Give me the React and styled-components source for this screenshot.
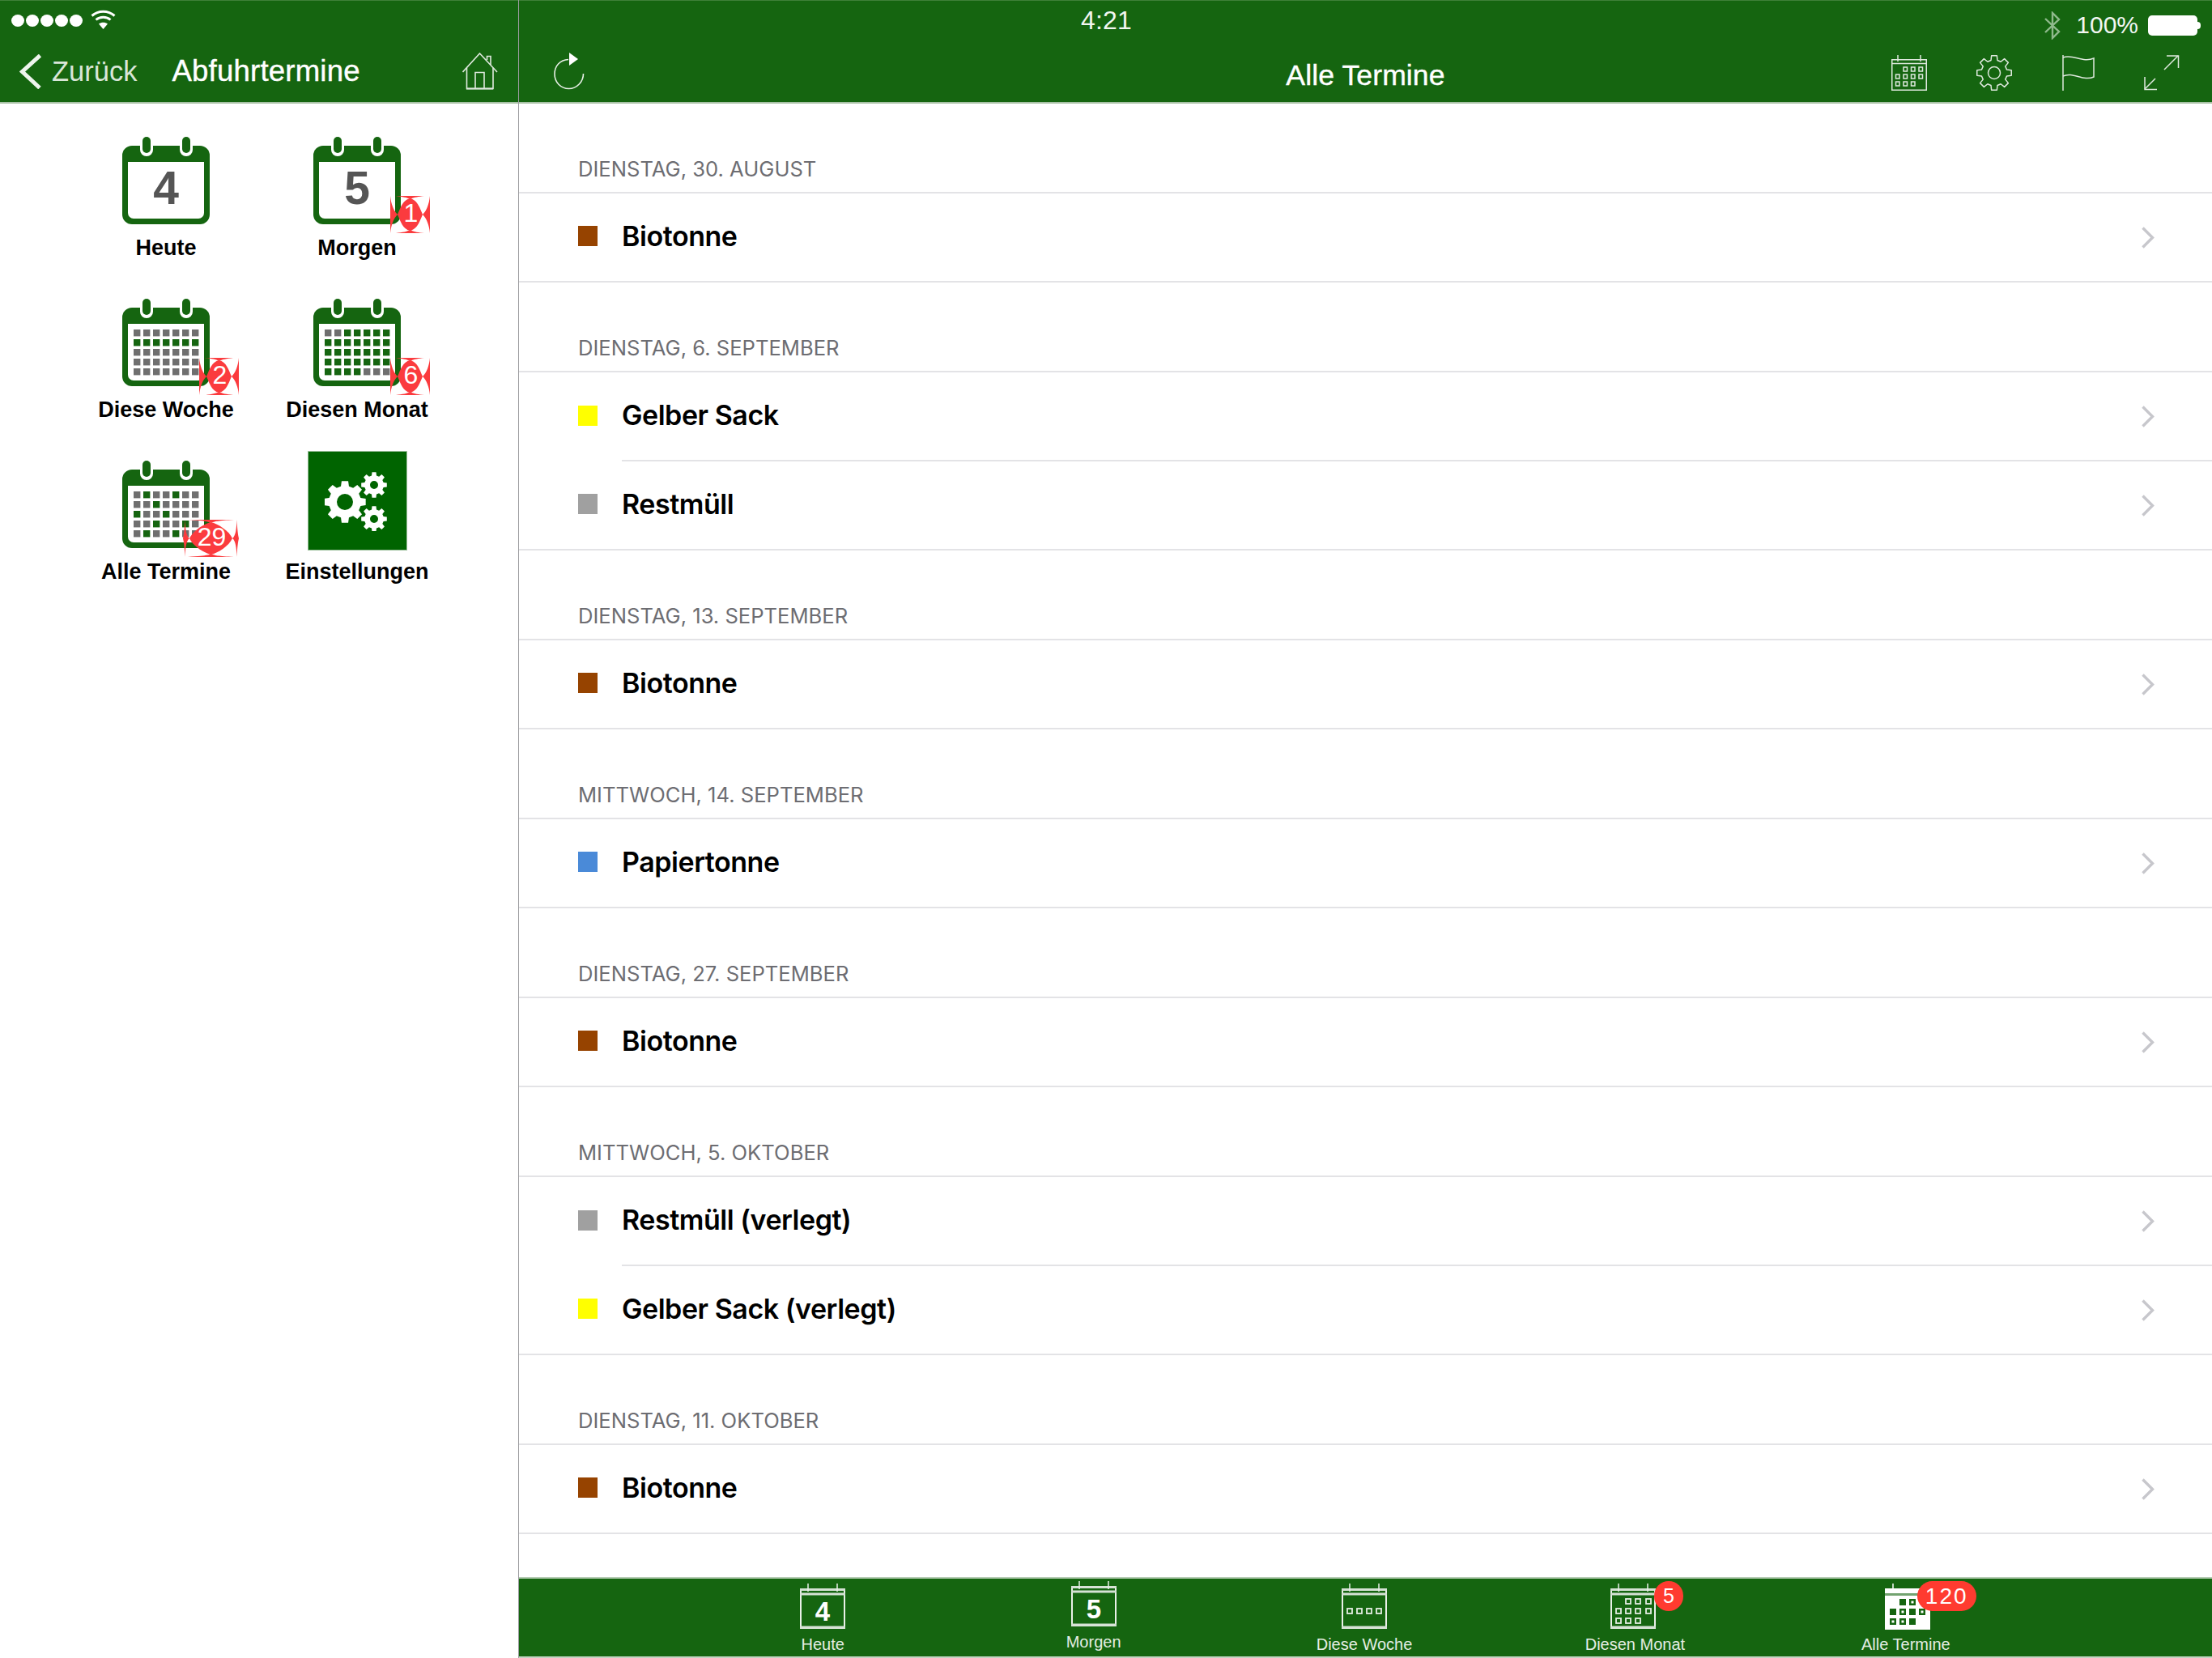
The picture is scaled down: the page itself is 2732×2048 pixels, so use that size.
import React from "react";
import styled, { createGlobalStyle } from "styled-components";

const GREEN = "#156510";

const Global = createGlobalStyle`
  html, body { margin: 0; padding: 0; background: #fff; }
  #root { width: 2732px; height: 2048px; overflow: hidden; }
`;

const Page = styled.div`
  width: 2732px;
  height: 2048px;
  display: flex;
  background: #fff;
  font-family: "Liberation Sans", Arial, sans-serif;
`;
const Sidebar = styled.aside`
  width: 641px;
  flex: none;
  border-right: 1px solid #9c9ca0;
  box-sizing: border-box;
  display: flex;
  flex-direction: column;
`;
const Main = styled.main`
  flex: 1;
  min-width: 0;
  display: flex;
  flex-direction: column;
`;
const Header = styled.header`
  height: 128px;
  flex: none;
  box-sizing: border-box;
  background: ${GREEN};
  border-top: 1px solid #3f8039;
  border-bottom: 2px solid #a9c2a7;
  display: flex;
  flex-direction: column;
  color: #fff;
`;
const StatusBar = styled.div`
  height: 39px;
  flex: none;
  display: flex;
  align-items: flex-start;
`;
const NavBar = styled.div`
  flex: 1;
  display: flex;
  align-items: center;
  padding-top: 10px;
`;
const Signal = styled.div`
  display: flex;
  gap: 2px;
  margin: 17px 0 0 14px;
`;
const Dot = styled.span`
  width: 16px;
  height: 15px;
  border-radius: 50%;
  background: #fff;
`;
const WifiIcon = styled.svg`
  margin: 11px 0 0 10px;
`;
const Clock = styled.div`
  margin: 6px 0 0 694px;
  font-size: 32px;
  line-height: 36px;
  letter-spacing: 0.2px;
  color: #f2f6f1;
`;
const StatusRight = styled.div`
  margin: 12px 13px 0 auto;
  display: flex;
  align-items: center;
`;
const Percent = styled.span`
  font-size: 30px;
  line-height: 36px;
  margin: 0 12px 0 19px;
  color: #f2f6f1;
`;
const Battery = styled.span`
  width: 61px;
  height: 25px;
  border-radius: 5px;
  background: #fff;
  position: relative;
  margin-right: 5px;
  &::after {
    content: "";
    position: absolute;
    left: 61px;
    top: 8px;
    width: 4px;
    height: 9px;
    border-radius: 0 4px 4px 0;
    background: #fff;
  }
`;
const BackChevron = styled.svg`
  margin-left: 24px;
`;
const BackText = styled.span`
  margin-left: 13px;
  font-size: 34.5px;
  color: #d9e6d8;
`;
const SideTitle = styled.span`
  margin-left: 43px;
  font-size: 36.6px;
  letter-spacing: 0.2px;
  color: #fff;
  -webkit-text-stroke: 0.4px #fff;
`;
const MainTitle = styled.span`
  margin-top: 10px;
  font-size: 35.6px;
  letter-spacing: 0.1px;
  color: #fff;
  -webkit-text-stroke: 0.4px #fff;
`;
const HomeIcon = styled.svg`
  margin-left: auto;
  margin-right: 25px;
`;
const MainNav = styled(NavBar)`
  display: grid;
  grid-template-columns: 1fr auto 1fr;
`;
const ReloadIcon = styled.svg`
  margin-left: 42px;
`;
const NavActions = styled.div`
  justify-self: end;
  display: flex;
  gap: 61.5px;
  margin: 4px 40px 0 0;
`;

const Grid = styled.div`
  display: grid;
  grid-template-columns: 236px 236px;
  grid-auto-rows: 200px;
  padding: 29px 0 0 87px;
`;
const Cell = styled.div`
  position: relative;
  display: flex;
  flex-direction: column;
  align-items: center;
`;
const CalendarSvg = styled.svg`
  margin-top: 12px;
  margin-bottom: 3px;
  display: block;
`;
const Tile = styled.div`
  width: 123px;
  height: 123px;
  background: #006400;
  box-shadow: 0 0 0 1px #9cc09c inset;
  display: flex;
  align-items: center;
  justify-content: center;
`;
const CellLabel = styled.div`
  margin-top: 10px;
  font-size: 27px;
  font-weight: 700;
  line-height: 32px;
  color: #000;
  white-space: nowrap;
`;
const Badge = styled.div`
  position: absolute;
  top: 85px;
  left: calc(50% + 90px - ${(p) => p.$w}px);
  width: ${(p) => p.$w}px;
  height: 46px;
  display: flex;
  align-items: center;
  justify-content: center;
  color: #fff;
  font-size: 32px;
  line-height: 46px;
  & svg {
    position: absolute;
    inset: 0;
  }
  & span {
    position: relative;
    margin-left: 2px;
    margin-top: -4px;
  }
`;

const List = styled.div`
  flex: 1;
  min-height: 0;
  overflow: hidden;
  font-family: Inter, "Liberation Sans", sans-serif;
`;
const SectionTitle = styled.div`
  height: 111px;
  box-sizing: border-box;
  border-bottom: 2px solid #e3e3e6;
  padding: 0 0 12px 73px;
  display: flex;
  align-items: flex-end;
  font-size: 25.6px;
  line-height: 32px;
  color: #6d6d72;
  text-transform: uppercase;
`;
const Row = styled.div`
  height: 110px;
  box-sizing: border-box;
  display: flex;
  align-items: stretch;
  ${(p) => (p.$last ? "border-bottom: 2px solid #e3e3e6;" : "")}
`;
const Swatch = styled.span`
  width: 24px;
  height: 25px;
  flex: none;
  align-self: center;
  margin: -3px 0 0 73px;
  background: ${(p) => p.$color};
`;
const RowBody = styled.div`
  flex: 1;
  margin-left: 30px;
  display: flex;
  align-items: center;
  justify-content: space-between;
  ${(p) => (p.$last ? "" : "border-bottom: 2px solid #e3e3e6;")}
`;
const RowTitle = styled.span`
  font-size: 34px;
  font-weight: 560;
  letter-spacing: -0.45px;
  color: #000;
  margin-top: -3px;
`;
const Disclosure = styled.svg`
  margin-right: 71px;
`;

const TabBar = styled.nav`
  height: 100px;
  flex: none;
  box-sizing: border-box;
  background: ${GREEN};
  border-top: 2px solid #b5ccb3;
  border-bottom: 2px solid #c3d4c2;
  display: flex;
  padding: 0 211px 0 208px;
`;
const Tab = styled.div`
  flex: 1;
  display: flex;
  flex-direction: column;
  align-items: center;
  padding-top: ${(p) => (p.$lift ? 3 : 6)}px;
`;
const TabIconWrap = styled.div`
  position: relative;
  width: 56px;
  height: 56px;
  margin-left: ${(p) => p.$nudge || 0}px;
`;
const TabLabel = styled.div`
  margin-top: 8px;
  font-size: 20px;
  line-height: 22px;
  color: #e4ede3;
  white-space: nowrap;
`;
const TabBadge = styled.div`
  position: absolute;
  top: -3px;
  left: ${(p) => p.$left}px;
  min-width: 36px;
  height: 37px;
  box-sizing: border-box;
  padding: 0 ${(p) => (p.$wide ? 10 : 0)}px;
  border-radius: 19px;
  background: #ff3b30;
  color: #fff;
  display: flex;
  align-items: center;
  justify-content: center;
  font-size: ${(p) => (p.$wide ? 28 : 25)}px;
  letter-spacing: ${(p) => (p.$wide ? 2 : 0)}px;
`;

const gearPath = (cx, cy, outer, inner, teeth) => {
  const pts = [];
  const step = (Math.PI * 2) / teeth;
  for (let i = 0; i < teeth; i++) {
    const a = i * step - Math.PI / 2;
    const d = step * 0.2;
    const e = step * 0.32;
    [
      [a - e, inner],
      [a - d, outer],
      [a + d, outer],
      [a + e, inner],
    ].forEach(([t, r]) =>
      pts.push(`${(cx + r * Math.cos(t)).toFixed(2)} ${(cy + r * Math.sin(t)).toFixed(2)}`)
    );
  }
  return "M" + pts.join("L") + "Z";
};
const circlePath = (cx, cy, r) =>
  `M${cx - r} ${cy}a${r} ${r} 0 1 0 ${r * 2} 0a${r} ${r} 0 1 0 ${-r * 2} 0Z`;

const Wifi = () => (
  <WifiIcon width="31" height="24" viewBox="0 0 31 24" fill="none" stroke="#fff" strokeWidth="3">
    <path d="M1.5 7.5C9.5 .5 21.5 .5 29.5 7.5" />
    <path d="M6.5 12.5C11.5 8 19.5 8 24.5 12.5" />
    <path d="M15.5 24L10 17.5C13 15 18 15 21 17.5Z" fill="#fff" stroke="none" />
  </WifiIcon>
);

const Bluetooth = () => (
  <svg width="20" height="35" viewBox="0 0 20 35" fill="none" stroke="#8fb98c" strokeWidth="2.4">
    <path d="M1 9L18 25L10 33V2L18 10L1 26" />
  </svg>
);

const Home = () => (
  <HomeIcon width="44" height="46" viewBox="0 0 44 46" fill="none" stroke="#dfe9de" strokeWidth="1.6">
    <path d="M.5 24L21.5 1L43 24" />
    <path d="M5.5 19V44.5H38V19" />
    <path d="M16 44V24.5H27V44" />
    <path d="M30.5 9V4.5H35V15" />
    <path d="M5 44.5H38" strokeWidth="2" />
  </HomeIcon>
);

const Reload = () => (
  <ReloadIcon width="40" height="46" viewBox="0 0 40 46" fill="none">
    <path d="M19 8.5C9 9 2 16 2 26.5C2 36.5 9.5 44.5 19.5 44.5C29.5 44.5 37.5 36 37.5 26" stroke="#e6efe5" strokeWidth="1.6" />
    <path d="M20 0L31 8L20 16Z" fill="#fff" />
  </ReloadIcon>
);

const iconStroke = "#dfe9de";

const NavCalendar = () => {
  const cells = [
    [10, 15],
    [19.5, 15],
    [29, 15],
    [0.5, 24],
    [10, 24],
    [19.5, 24],
    [29, 24],
    [0.5, 33],
    [10, 33],
    [19.5, 33],
  ];
  return (
    <svg width="44" height="44" viewBox="0 0 44 44" fill="none" stroke={iconStroke} strokeWidth="1.5">
      <rect x=".75" y="5.75" width="42.5" height="37.5" />
      <path d="M0 10.5H44M8 0V8M36 0V8" />
      <g transform="translate(5 0)">
        {cells.map(([x, y]) => (
          <rect key={`${x}-${y}`} x={x} y={y} width="4.5" height="5" />
        ))}
      </g>
    </svg>
  );
};

const NavGear = () => (
  <svg width="44" height="44" viewBox="0 0 44 44" fill="none" stroke={iconStroke} strokeWidth="1.5" strokeLinejoin="round">
    <path d={gearPath(22, 22, 21.5, 16, 8)} />
    <circle cx="22" cy="22" r="7.5" />
  </svg>
);

const NavFlag = () => (
  <svg width="40" height="44" viewBox="0 0 40 44" fill="none" stroke={iconStroke} strokeWidth="1.5">
    <path d="M1 0V44" />
    <path d="M1 3C13 -2 25 10 39 4V27C26 33 13 20 1 26" />
  </svg>
);

const NavExpand = () => (
  <svg width="44" height="44" viewBox="0 0 44 44" fill="none" stroke={iconStroke} strokeWidth="1.5">
    <path d="M1 42L14 29M25 18L42 1" />
    <path d="M28 1H42.5V16" />
    <path d="M1 27V42.5H16" />
  </svg>
);

const Calendar = ({ number, cells }) => {
  const palette = { g: "#6f6f6f", G: GREEN };
  return (
    <CalendarSvg width="108" height="108" viewBox="0 0 108 108">
      <rect x="0" y="11" width="108" height="97" rx="12" fill={GREEN} />
      <path d="M7 31H101V94a7 7 0 0 1-7 7H14a7 7 0 0 1-7-7Z" fill="#fff" />
      {[30, 79].map((x) => (
        <g key={x}>
          <rect x={x - 8} y="0" width="16" height="24" rx="8" fill="#fff" />
          <rect x={x - 5} y="0" width="10" height="20" rx="5" fill={GREEN} />
        </g>
      ))}
      {number && (
        <text x="54" y="83" textAnchor="middle" fontFamily="Liberation Sans" fontWeight="700" fontSize="57" fill="#555">
          {number}
        </text>
      )}
      {cells &&
        cells.map((row, r) =>
          row.split("").map((c, i) => (
            <rect key={`${r}-${i}`} x={14 + i * 12} y={38 + r * 12} width="8.4" height="8.4" fill={palette[c]} />
          ))
        )}
    </CalendarSvg>
  );
};

const CellBadge = ({ text, w = 49, wing = 9, thin }) => {
  const c = w / 2;
  const m = 23;
  const r = w - wing;
  const lens = `M${wing} ${m}C${wing + 4} ${m - 9} ${c - 9} ${m - 18} ${c} ${m - 20}C${c + 9} ${m - 18} ${r - 4} ${m - 9} ${r} ${m}C${r - 4} ${m + 9} ${c + 9} ${m + 18} ${c} ${m + 20}C${c - 9} ${m + 18} ${wing + 4} ${m + 9} ${wing} ${m}Z`;
  const left = thin
    ? `M2.5 0C3 12 4 20 ${wing} ${m}C4 26 3 34 2.5 46C2 34 1 27 0 ${m}C1 19 2 12 2.5 0Z`
    : `M0 0C1 10 4 18 ${wing} ${m}C4 28 1 36 0 46Z`;
  return (
    <Badge $w={w}>
      <svg width={w} height="46" viewBox={`0 0 ${w} 46`}>
        <path d={lens} fill="#fb3b3e" />
        <path d={left} fill="#fb3b3e" />
        <path d={left} fill="#fb3b3e" transform={`translate(${w} 0) scale(-1 1)`} />
        <path d={`M${wing - 2} 0H${r + 2}C${c + 9} 1 ${c + 4} 2 ${c} 4C${c - 4} 2 ${c - 9} 1 ${wing - 2} 0Z`} fill="#fb3b3e" />
        <path d={`M${wing - 2} 46H${r + 2}C${c + 9} 45 ${c + 4} 44 ${c} 42C${c - 4} 44 ${c - 9} 45 ${wing - 2} 46Z`} fill="#fb3b3e" />
      </svg>
      <span>{text}</span>
    </Badge>
  );
};

const SettingsGlyph = () => (
  <svg width="80" height="74" viewBox="0 0 80 74" fill="#fff" fillRule="evenodd">
    <path d={gearPath(25, 38, 26, 20, 8) + circlePath(25, 38, 10)} />
    <path d={gearPath(61, 17, 16, 12, 8) + circlePath(61, 17, 5)} />
    <path d={gearPath(61, 59, 16, 12, 8) + circlePath(61, 59, 5)} />
  </svg>
);

const TabFrame = ({ children, y = 6 }) => (
  <svg width="56" height="56" viewBox="0 0 56 56" fill="none">
    <rect x="1" y={y + 1} width="54" height="48" stroke="#e9f0e8" strokeWidth="2" />
    <path d={`M0 ${y + 1.5}H56M0 ${y + 7}H56M0 ${y + 48}H56`} stroke="#d6e2d5" strokeWidth="3" />
    <path d={`M10 0V${y + 4}M46 0V${y + 4}`} stroke="#e9f0e8" strokeWidth="1.5" />
    {children}
  </svg>
);

const TabNumber = ({ value }) => (
  <TabFrame>
    <text x="28" y="46" textAnchor="middle" fontFamily="Liberation Sans" fontWeight="700" fontSize="33" fill="#fff">
      {value}
    </text>
  </TabFrame>
);

const TabWeek = () => (
  <TabFrame>
    {[7, 19, 31, 43].map((x) => (
      <rect key={x} x={x} y="31" width="6" height="6" fill="none" stroke="#e4ede3" strokeWidth="1.8" />
    ))}
  </TabFrame>
);

const TabMonth = () => {
  const cells = [
    [19, 19],
    [31, 19],
    [44, 19],
    [7, 31],
    [19, 31],
    [31, 31],
    [44, 31],
    [7, 43],
    [19, 43],
    [31, 43],
  ];
  return (
    <TabFrame>
      {cells.map(([x, y]) => (
        <rect key={`${x}-${y}`} x={x} y={y} width="6" height="6" fill="none" stroke="#e4ede3" strokeWidth="1.8" />
      ))}
    </TabFrame>
  );
};

const TabAll = () => {
  const solid = [
    [18, 19],
    [6, 31],
    [30, 31],
    [30, 43],
  ];
  const dotted = [
    [30, 19],
    [18, 31],
    [42, 31],
    [6, 43],
    [18, 43],
  ];
  return (
    <svg width="56" height="57" viewBox="0 0 56 57" fill="none">
      <path d="M10 0V7" stroke="#fff" strokeWidth="1.5" />
      <rect x="0" y="6" width="56" height="51" fill="#fff" />
      <rect x="0" y="12" width="56" height="3" fill={GREEN} opacity=".6" />
      {solid.map(([x, y]) => (
        <rect key={`${x}-${y}`} x={x} y={y} width="8" height="8" fill={GREEN} />
      ))}
      {dotted.map(([x, y]) => (
        <g key={`${x}-${y}`}>
          <rect x={x} y={y} width="8" height="8" fill={GREEN} />
          <rect x={x + 2.5} y={y + 2.5} width="3" height="3" fill="#fff" />
        </g>
      ))}
    </svg>
  );
};

const sections = [
  ["Dienstag, 30. August", [["Biotonne", "#964300"]]],
  ["Dienstag, 6. September", [["Gelber Sack", "#ffff00"], ["Restmüll", "#a0a0a0"]]],
  ["Dienstag, 13. September", [["Biotonne", "#964300"]]],
  ["Mittwoch, 14. September", [["Papiertonne", "#4a8ad8"]]],
  ["Dienstag, 27. September", [["Biotonne", "#964300"]]],
  ["Mittwoch, 5. Oktober", [["Restmüll (verlegt)", "#a0a0a0"], ["Gelber Sack (verlegt)", "#ffff00"]]],
  ["Dienstag, 11. Oktober", [["Biotonne", "#964300"]]],
];

const weekCells = ["ggggggg", "GGGGGGG", "ggggggg", "ggggggg", "ggggggg"];
const monthCells = ["ggGGGGG", "GGGGGGG", "GGGGGGG", "GGGGGGG", "GGGGggg"];
const allCells = ["gGggGgg", "ggGgggg", "GggGggg", "ggGggGg", "gGggGgg"];

export default function App() {
  return (
    <Page>
      <Global />
      <Sidebar>
        <Header>
          <StatusBar>
            <Signal>
              {[0, 1, 2, 3, 4].map((i) => (
                <Dot key={i} />
              ))}
            </Signal>
            <Wifi />
          </StatusBar>
          <NavBar>
            <BackChevron width="27" height="43" viewBox="0 0 27 43" fill="none" stroke="#eef4ed" strokeWidth="5">
              <path d="M25.5 1.5L3.5 21.5L25 41.5" />
            </BackChevron>
            <BackText>Zurück</BackText>
            <SideTitle>Abfuhrtermine</SideTitle>
            <Home />
          </NavBar>
        </Header>
        <Grid>
          <Cell>
            <Calendar number="4" />
            <CellLabel>Heute</CellLabel>
          </Cell>
          <Cell>
            <Calendar number="5" />
            <CellBadge text="1" />
            <CellLabel>Morgen</CellLabel>
          </Cell>
          <Cell>
            <Calendar cells={weekCells} />
            <CellBadge text="2" />
            <CellLabel>Diese Woche</CellLabel>
          </Cell>
          <Cell>
            <Calendar cells={monthCells} />
            <CellBadge text="6" />
            <CellLabel>Diesen Monat</CellLabel>
          </Cell>
          <Cell>
            <Calendar cells={allCells} />
            <CellBadge text="29" w={69} wing={8} thin />
            <CellLabel>Alle Termine</CellLabel>
          </Cell>
          <Cell>
            <Tile>
              <SettingsGlyph />
            </Tile>
            <CellLabel>Einstellungen</CellLabel>
          </Cell>
        </Grid>
      </Sidebar>
      <Main>
        <Header>
          <StatusBar>
            <Clock>4:21</Clock>
            <StatusRight>
              <Bluetooth />
              <Percent>100%</Percent>
              <Battery />
            </StatusRight>
          </StatusBar>
          <MainNav>
            <Reload />
            <MainTitle>Alle Termine</MainTitle>
            <NavActions>
              <NavCalendar />
              <NavGear />
              <NavFlag />
              <NavExpand />
            </NavActions>
          </MainNav>
        </Header>
        <List>
          {sections.map(([title, rows]) => (
            <section key={title}>
              <SectionTitle>{title}</SectionTitle>
              {rows.map(([name, color], i) => {
                const last = i === rows.length - 1;
                return (
                  <Row key={name} $last={last}>
                    <Swatch $color={color} />
                    <RowBody $last={last}>
                      <RowTitle>{name}</RowTitle>
                      <Disclosure width="16" height="27" viewBox="0 0 16 27" fill="none" stroke="#c7c7cc" strokeWidth="3.4">
                        <path d="M1.5 1.5L13.5 13.5L1.5 25.5" />
                      </Disclosure>
                    </RowBody>
                  </Row>
                );
              })}
            </section>
          ))}
        </List>
        <TabBar>
          <Tab>
            <TabIconWrap>
              <TabNumber value="4" />
            </TabIconWrap>
            <TabLabel>Heute</TabLabel>
          </Tab>
          <Tab $lift>
            <TabIconWrap>
              <TabNumber value="5" />
            </TabIconWrap>
            <TabLabel>Morgen</TabLabel>
          </Tab>
          <Tab>
            <TabIconWrap>
              <TabWeek />
            </TabIconWrap>
            <TabLabel>Diese Woche</TabLabel>
          </Tab>
          <Tab>
            <TabIconWrap $nudge={-5}>
              <TabMonth />
              <TabBadge $left={54}>5</TabBadge>
            </TabIconWrap>
            <TabLabel>Diesen Monat</TabLabel>
          </Tab>
          <Tab>
            <TabIconWrap $nudge={4}>
              <TabAll />
              <TabBadge $left={40} $wide>120</TabBadge>
            </TabIconWrap>
            <TabLabel>Alle Termine</TabLabel>
          </Tab>
        </TabBar>
      </Main>
    </Page>
  );
}
